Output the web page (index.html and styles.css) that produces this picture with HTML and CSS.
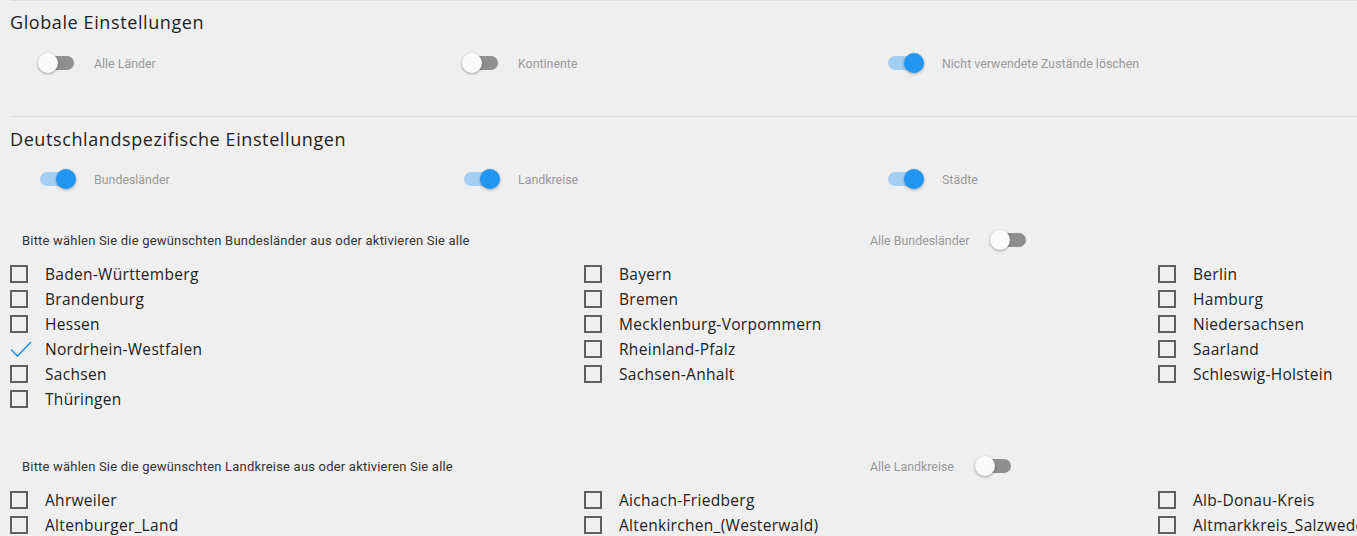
FILE: index.html
```html
<!DOCTYPE html>
<html lang="de">
<head>
    <meta charset="UTF-8">
    <meta name="viewport" content="width=device-width, initial-scale=1.0">
    <title>Einstellungen</title>
    <link rel="stylesheet" href="styles.css">
</head>
<body>
    <div class="page">
        <div class="block">
            <h2>Globale Einstellungen</h2>
            <div class="toggles">
                <label class="opt"><span class="switch"></span>Alle Länder</label>
                <label class="opt"><span class="switch"></span>Kontinente</label>
                <label class="opt"><span class="switch on"></span>Nicht verwendete Zustände löschen</label>
            </div>
        </div>

        <div class="block">
            <h2>Deutschlandspezifische Einstellungen</h2>
            <div class="toggles tight">
                <label class="opt"><span class="switch on"></span>Bundesländer</label>
                <label class="opt"><span class="switch on"></span>Landkreise</label>
                <label class="opt"><span class="switch on"></span>Städte</label>
            </div>

            <div class="pick-head">
                <span class="hint">Bitte wählen Sie die gewünschten Bundesländer aus oder aktivieren Sie alle</span>
                <label class="all">Alle Bundesländer<span class="switch"></span></label>
            </div>
            <div class="checks">
                <label class="check"><span class="box"></span>Baden-Württemberg</label>
                <label class="check"><span class="box"></span>Bayern</label>
                <label class="check"><span class="box"></span>Berlin</label>
                <label class="check"><span class="box"></span>Brandenburg</label>
                <label class="check"><span class="box"></span>Bremen</label>
                <label class="check"><span class="box"></span>Hamburg</label>
                <label class="check"><span class="box"></span>Hessen</label>
                <label class="check"><span class="box"></span>Mecklenburg-Vorpommern</label>
                <label class="check"><span class="box"></span>Niedersachsen</label>
                <label class="check"><span class="tick"><svg width="22" height="18" viewBox="0 0 22 18"><path d="M1 9.5 L7.5 16 L21 2" fill="none" stroke="#2196f3" stroke-width="1.6"/></svg></span>Nordrhein-Westfalen</label>
                <label class="check"><span class="box"></span>Rheinland-Pfalz</label>
                <label class="check"><span class="box"></span>Saarland</label>
                <label class="check"><span class="box"></span>Sachsen</label>
                <label class="check"><span class="box"></span>Sachsen-Anhalt</label>
                <label class="check"><span class="box"></span>Schleswig-Holstein</label>
                <label class="check"><span class="box"></span>Thüringen</label>
            </div>

            <div class="pick-head second">
                <span class="hint">Bitte wählen Sie die gewünschten Landkreise aus oder aktivieren Sie alle</span>
                <label class="all">Alle Landkreise<span class="switch"></span></label>
            </div>
            <div class="checks">
                <label class="check"><span class="box"></span>Ahrweiler</label>
                <label class="check"><span class="box"></span>Aichach-Friedberg</label>
                <label class="check"><span class="box"></span>Alb-Donau-Kreis</label>
                <label class="check"><span class="box"></span>Altenburger_Land</label>
                <label class="check"><span class="box"></span>Altenkirchen_(Westerwald)</label>
                <label class="check"><span class="box"></span>Altmarkkreis_Salzwedel</label>
            </div>
        </div>
    </div>
</body>
</html>
```

FILE: styles.css
```css
body {
    margin: 0;
    background-color: #efefef;
    overflow: hidden;
    font-family: "Open Sans", sans-serif;
    color: #222;
}
.page {
    width: 1740px;
    padding-left: 10px;
}
.block {
    border-top: 1px solid #dcdcdc;
    padding-top: 10px;
}
.block:first-child {
    padding-top: 9px;
    height: 106px;
}
h2 {
    margin: 0;
    font-size: 18px;
    font-weight: 400;
    line-height: 24px;
    letter-spacing: 0.6px;
    color: #1e1e1e;
}
.toggles {
    display: grid;
    grid-template-columns: 424px 424px 424px;
    margin-top: 19px;
}
.toggles.tight {
    margin-top: 18px;
}
.opt {
    display: flex;
    align-items: center;
    gap: 18px;
    padding-left: 28px;
    font-family: Roboto, sans-serif;
    font-size: 12.4px;
    color: #9a9a9a;
    height: 20px;
}
.switch {
    position: relative;
    display: inline-block;
    width: 38px;
    height: 20px;
    flex: none;
}
.switch::before {
    content: "";
    position: absolute;
    left: 2px;
    top: 3px;
    width: 34px;
    height: 14px;
    border-radius: 7px;
    background: #8f8f8f;
}
.switch::after {
    content: "";
    position: absolute;
    left: 0;
    top: 0;
    width: 20px;
    height: 20px;
    border-radius: 50%;
    background: #fafafa;
    box-shadow: 0 1px 3px rgba(0, 0, 0, 0.35);
}
.switch.on::before {
    background: #a4cff3;
}
.switch.on::after {
    left: 18px;
    background: #2196f3;
}
.pick-head {
    display: flex;
    align-items: center;
    height: 20px;
    margin-top: 41px;
}
.pick-head.second {
    margin-top: 45px;
}
.hint {
    width: 848px;
    padding-left: 12px;
    font-family: Roboto, sans-serif;
    font-size: 13px;
    letter-spacing: 0.2px;
    color: #333;
}
.all {
    display: flex;
    align-items: center;
    gap: 21px;
    font-family: Roboto, sans-serif;
    font-size: 12.4px;
    color: #9a9a9a;
}
.checks {
    display: grid;
    grid-template-columns: 574px 574px 574px;
    margin-top: 11px;
}
.check {
    display: flex;
    align-items: center;
    height: 25px;
    font-size: 15.5px;
    letter-spacing: 0.3px;
    color: #222;
    white-space: nowrap;
}
.box {
    width: 14px;
    height: 14px;
    border: 2px solid #5f5f5f;
    margin-right: 17px;
    flex: none;
}
.tick {
    display: flex;
    width: 22px;
    margin-right: 13px;
    flex: none;
}
```
